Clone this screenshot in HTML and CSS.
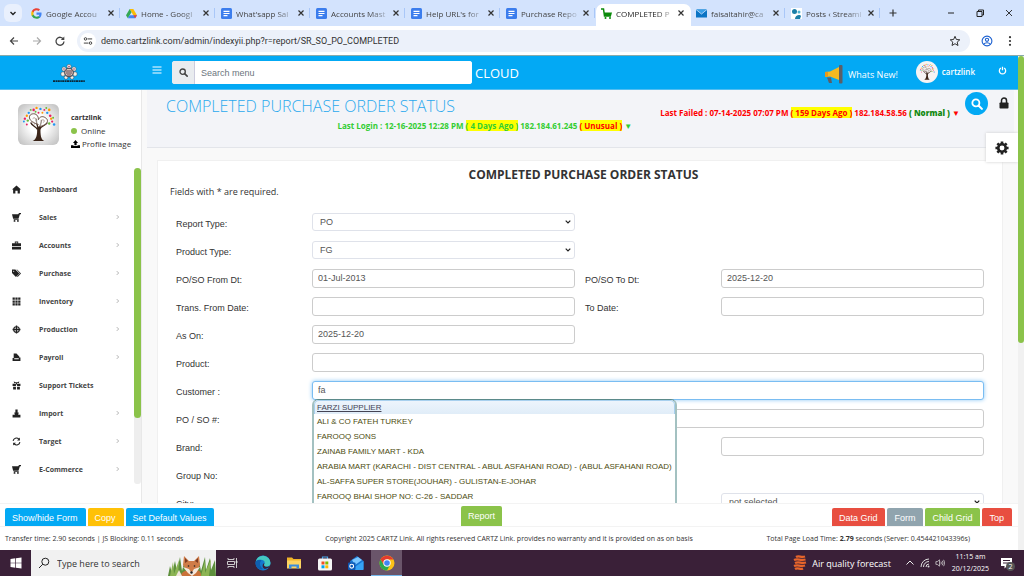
FILE: index.html
```
<!DOCTYPE html>
<html lang="en">
<head>
<meta charset="utf-8">
<title>COMPLETED PURCHASE ORDER STATUS</title>
<meta name="viewport" content="width=device-width, initial-scale=1">
<link rel="stylesheet" href="styles.css">
</head>
<body>
<svg class="defs" aria-hidden="true">
  <symbol id="doc" viewBox="0 0 11 11"><rect width="11" height="11" rx="1.500" fill="#3b7ded"/><path d="M2.500 3.300h6M2.500 5.500h6M2.500 7.700h4" stroke="#fff" stroke-width="1.200"/></symbol>
  <symbol id="x" viewBox="0 0 8 8"><path d="M1.500 1.500l5 5M6.500 1.500l-5 5" stroke="#333" stroke-width="1.200"/></symbol>
  <symbol id="mag" viewBox="0 0 16 16"><circle cx="6.500" cy="6.500" r="4.700" fill="none" stroke="currentColor" stroke-width="2.400"/><path d="M10 10l4.500 4.500" stroke="currentColor" stroke-width="2.800" stroke-linecap="round"/></symbol>
  <symbol id="chev" viewBox="0 0 6 8"><path d="M2 1.500L4.500 4 2 6.500" fill="none" stroke="#999" stroke-width="1"/></symbol>
  <symbol id="cart" viewBox="0 0 16 16"><path d="M0 2h11l1.500-2H16v2h-2L11.500 10H2zM3 11h9v1.500H3z"/><circle cx="4.500" cy="14" r="1.700"/><circle cx="10.500" cy="14" r="1.700"/></symbol>
  <symbol id="tree" viewBox="0 0 40 40">
    <path d="M20 25c-1-4-3-7-2-11m2 11c2-4 3-6 3-10M19 25c-2-3-6-4-7-7m9 7c2-4 6-4 8-7" fill="none" stroke="#3a2418" stroke-width="1.400"/>
    <path d="M18.500 23h3.500c0 7 0 12 4 14H14c4-2 5-7 4.500-14z" fill="#3a2418"/>
    <path d="M20 20C8 17 9 9 15 9c4 0 5 4 5 6 1-3 4-4 7-2 5 3 1 9-7 9" fill="#fff" fill-opacity=".5" stroke="#6b5145" stroke-width="1"/>
    <path d="M14 14c2-2 4 0 3 2m6 0c2-2 4 0 2 2m-12-1c2 0 3 1 3 3" fill="none" stroke="#9a847a" stroke-width=".8"/>
    <g fill="#e91e63"><circle cx="15" cy="5" r="1.300"/><circle cx="26" cy="5" r="1"/><circle cx="32" cy="11" r="1.300"/><circle cx="6" cy="14" r="1.200"/><circle cx="8" cy="20" r="1"/><circle cx="20" cy="8" r="1"/><circle cx="34" cy="17" r="1.100"/></g>
    <g fill="#2196f3"><circle cx="10" cy="8" r="1.200"/><circle cx="22" cy="4" r="1.200"/><circle cx="29" cy="8" r="1.200"/><circle cx="36" cy="20" r="1.300"/><circle cx="5" cy="17" r="1"/></g>
    <g fill="#ff9800"><circle cx="18" cy="3" r="1.200"/><circle cx="8" cy="11" r="1.200"/><circle cx="31" cy="5" r="1.300"/><circle cx="33" cy="14" r="1.200"/><circle cx="24" cy="8" r="1"/></g>
    <g fill="#66bb3a"><circle cx="12" cy="5" r="1"/><circle cx="28" cy="3" r="1"/><circle cx="35" cy="13" r="1"/><circle cx="9" cy="16" r="1.200"/><circle cx="31" cy="19" r="1.200"/><circle cx="17" cy="7" r="1"/></g>
  </symbol>
</svg>

<div class="tabs">
  <button class="tab-search" aria-label="Search tabs"><svg viewBox="0 0 10 10"><path d="M2.500 4l2.500 2.500L7.500 4" fill="none" stroke="#222" stroke-width="1.400"/></svg></button>
  <div class="tab"><svg class="fav" viewBox="0 0 24 24"><path fill="#4285f4" d="M23 12.300c0-.8-.1-1.500-.2-2.300H12v4.500h6.200a5.300 5.300 0 0 1-2.300 3.500v3h3.700c2.200-2 3.400-5 3.400-8.700z"/><path fill="#34a853" d="M12 23.500c3.100 0 5.700-1 7.600-2.800l-3.700-2.900c-1 .7-2.300 1.100-3.900 1.100-3 0-5.500-2-6.400-4.700H1.800v3A11.500 11.500 0 0 0 12 23.500z"/><path fill="#fbbc05" d="M5.600 14.200a7 7 0 0 1 0-4.400v-3H1.800a11.500 11.500 0 0 0 0 10.400z"/><path fill="#ea4335" d="M12 5.100c1.700 0 3.200.6 4.400 1.700l3.300-3.300A11.500 11.500 0 0 0 1.800 6.800l3.800 3C6.500 7.100 9 5.100 12 5.100z"/></svg><span>Google Accou</span><svg class="close"><use href="#x"/></svg></div>
  <div class="tab"><svg class="fav" viewBox="0 0 24 22"><path fill="#fbbc04" d="M8 1h8l8 14h-8z"/><path fill="#34a853" d="M8 1l4 7L4 21.500 0 15z"/><path fill="#4285f4" d="M8 15h16l-4 6.500H4z"/><path fill="#ea4335" d="M16 15h8l-4 6.500z"/></svg><span>Home - Googl</span><svg class="close"><use href="#x"/></svg></div>
  <div class="tab"><svg class="fav"><use href="#doc"/></svg><span>What'sapp Sal</span><svg class="close"><use href="#x"/></svg></div>
  <div class="tab"><svg class="fav"><use href="#doc"/></svg><span>Accounts Mast</span><svg class="close"><use href="#x"/></svg></div>
  <div class="tab"><svg class="fav"><use href="#doc"/></svg><span>Help URL's for</span><svg class="close"><use href="#x"/></svg></div>
  <div class="tab"><svg class="fav"><use href="#doc"/></svg><span>Purchase Repo</span><svg class="close"><use href="#x"/></svg></div>
  <div class="tab active"><svg class="fav" viewBox="0 0 11 11"><path d="M0 1h2.500l1 7H10" fill="none" stroke="#0a8a0a" stroke-width="1.500"/><path d="M3 4.500h8L10 8H3.500z" fill="#0a8a0a"/><circle cx="4.500" cy="10" r="1" fill="#0a8a0a"/><circle cx="9" cy="10" r="1" fill="#0a8a0a"/></svg><span>COMPLETED P</span><svg class="close"><use href="#x"/></svg></div>
  <div class="tab"><svg class="fav" viewBox="0 0 11 11"><rect y="1.500" width="11" height="8" fill="#0b74c4"/><path d="M0 1.500l5.500 4.500L11 1.500" fill="#39a0e8" stroke="#d3e3fd" stroke-width=".8"/></svg><span>faisaltahir@ca</span><svg class="close"><use href="#x"/></svg></div>
  <div class="tab"><svg class="fav" viewBox="0 0 11 11"><rect width="11" height="11" fill="#fff"/><circle cx="3.500" cy="3.500" r="2.500" fill="#1b7fa8"/><circle cx="8" cy="4" r="1.500" fill="#4fb3d0"/><path d="M4 11c0-4 5-5 6-3l-1 3z" fill="#1b7fa8"/></svg><span>Posts ‹ Streaml</span><svg class="close"><use href="#x"/></svg></div>
  <button class="newtab" aria-label="New tab"><svg viewBox="0 0 10 10"><path d="M5 1.500v7M1.500 5h7" stroke="#333" stroke-width="1.200"/></svg></button>
  <div class="win">
    <button aria-label="Minimise"><svg viewBox="0 0 10 10"><path d="M2 5h6" stroke="#222"/></svg></button>
    <button aria-label="Restore"><svg viewBox="0 0 10 10"><path d="M2 3.500h5v5H2zM3.500 3.500V2h5v5H7" fill="none" stroke="#222"/></svg></button>
    <button aria-label="Close"><svg viewBox="0 0 10 10"><path d="M2 2l6 6M8 2L2 8" stroke="#222" stroke-width=".9"/></svg></button>
  </div>
</div>

<div class="toolbar">
  <button aria-label="Back"><svg viewBox="0 0 12 12"><path d="M10 6H2.500M6 2.500L2.500 6 6 9.500" fill="none" stroke="#444" stroke-width="1.200"/></svg></button>
  <button aria-label="Forward"><svg viewBox="0 0 12 12"><path d="M2 6h7.500M6 2.500L9.500 6 6 9.500" fill="none" stroke="#aaa" stroke-width="1.200"/></svg></button>
  <button aria-label="Reload"><svg viewBox="0 0 12 12"><path d="M9.500 4.300A4 4 0 1 0 10 6.500" fill="none" stroke="#444" stroke-width="1.300"/><path d="M10.300 1.500v3.500H6.800z" fill="#444"/></svg></button>
  <div class="omnibox">
    <span class="site"><svg viewBox="0 0 12 12"><path d="M5.500 3.500H11M1 8.500h5.500" stroke="#444" stroke-width="1.200"/><circle cx="3" cy="3.500" r="1.500" fill="none" stroke="#444" stroke-width="1.200"/><circle cx="9" cy="8.500" r="1.500" fill="none" stroke="#444" stroke-width="1.200"/></svg></span>
    <input type="text" aria-label="Address" value="demo.cartzlink.com/admin/indexyii.php?r=report/SR_SO_PO_COMPLETED">
    <svg class="star" viewBox="0 0 12 12"><path d="M6 1.300l1.400 3.200 3.400.3-2.600 2.300.8 3.400L6 8.700l-3 1.800.8-3.400-2.600-2.300 3.400-.3z" fill="none" stroke="#333"/></svg>
  </div>
  <button aria-label="Profile"><svg viewBox="0 0 12 12"><circle cx="6" cy="6" r="4.900" fill="none" stroke="#1a5fd0" stroke-width="1.100"/><circle cx="6" cy="4.800" r="1.600" fill="none" stroke="#1a5fd0" stroke-width="1.100"/><path d="M2.800 9.200c1.500-2 5-2 6.400 0" fill="none" stroke="#1a5fd0" stroke-width="1.100"/></svg></button>
  <button aria-label="Menu"><svg viewBox="0 0 12 12"><g fill="#333"><circle cx="6" cy="2.200" r="1.100"/><circle cx="6" cy="6" r="1.100"/><circle cx="6" cy="9.800" r="1.100"/></g></svg></button>
</div>

<div class="page">
  <div class="app">
    <header class="topbar">
      <a class="logo" href="#" aria-label="Home"><svg viewBox="0 0 34 20"><g fill="#f3efe6" stroke="#345" stroke-width=".5"><circle cx="17" cy="3.500" r="2.200"/><circle cx="12" cy="6" r="2.200"/><circle cx="22" cy="6" r="2.200"/><circle cx="11" cy="11" r="2.200"/><circle cx="23" cy="11" r="2.200"/><circle cx="14" cy="14.500" r="1.800"/><circle cx="20" cy="14.500" r="1.800"/></g><circle cx="17" cy="9.500" r="4.300" fill="#d8c7bd" stroke="#4a3a44" stroke-width="1"/><path d="M14 8h6M14 10h6M15 12h4" stroke="#534" stroke-width=".9"/><g fill="#b03a6b"><circle cx="17" cy="3.500" r=".8"/><circle cx="12" cy="6" r=".8"/><circle cx="22" cy="6" r=".8"/></g><path d="M1 18.200h32" stroke="#0b2738" stroke-width="1.800" stroke-dasharray="2.200 .5 1.500 .4"/></svg></a>
      <button class="burger" aria-label="Toggle menu"><svg viewBox="0 0 10 8"><path d="M.5 1h9M.5 4h9M.5 7h9" stroke="#fff" stroke-width="1.200"/></svg></button>
      <form class="search">
        <label for="menu-search" aria-label="Search menu"><svg><use href="#mag"/></svg></label>
        <input id="menu-search" type="text" placeholder="Search menu">
      </form>
      <span class="cloud">CLOUD</span>
      <a class="news" href="#"><svg viewBox="0 0 20 19"><path d="M1 7l5-.5L15 2v13l-9-3.500L1 12z" fill="#f5b921"/><path d="M1 7l3-.3v5L1 12z" fill="#e79a1a"/><rect x="15" y="0" width="3.500" height="18.500" rx="1" fill="#5c5f66"/><path d="M3 12.500h4l1 5.500H5z" fill="#5c5f66"/></svg>Whats New!</a>
      <a class="me" href="#"><svg class="avatar"><use href="#tree"/></svg>cartzlink</a>
      <button class="power" aria-label="Log out"><svg viewBox="0 0 10 10"><path d="M3.200 2.300a3.500 3.500 0 1 0 3.600 0M5 .8v4" fill="none" stroke="#fff" stroke-width="1.400"/></svg></button>
    </header>

    <div class="body">
      <aside class="side">
        <div class="user">
          <svg class="photo"><use href="#tree"/></svg>
          <div class="who">
            <strong>cartzlink</strong>
            <span><i class="dot"></i>Online</span>
            <a href="#"><svg viewBox="0 0 16 14"><path d="M8 0l4.500 5H10v4H6V5H3.500zM0 9h4.500v1.500h7V9H16v5H0z"/></svg>Profile Image</a>
          </div>
        </div>
        <div class="menu-wrap">
          <nav class="menu">
            <a href="#"><svg viewBox="0 0 16 16"><path d="M8 1l8 7h-2v7h-4v-5H6v5H2V8H0z"/></svg><span>Dashboard</span></a>
            <a href="#"><svg><use href="#cart"/></svg><span>Sales</span><svg class="chev"><use href="#chev"/></svg></a>
            <a href="#"><svg viewBox="0 0 16 16"><path d="M5 4V1h6v3h5v5H0V4zm1.500 0h3V2.500h-3zM0 10h16v5H0z"/></svg><span>Accounts</span><svg class="chev"><use href="#chev"/></svg></a>
            <a href="#"><svg viewBox="0 0 16 16"><path d="M0 1h6l7 7-6 6-7-7zM8 1h1l7 7-6 6-1-1 5-5z"/><circle cx="3" cy="4" r="1" fill="#fff"/></svg><span>Purchase</span><svg class="chev"><use href="#chev"/></svg></a>
            <a href="#"><svg viewBox="0 0 16 16"><path d="M1 1h4v4H1zM6 1h4v4H6zM11 1h4v4h-4zM1 6h4v4H1zM6 6h4v4H6zM11 6h4v4h-4zM1 11h4v4H1zM6 11h4v4H6zM11 11h4v4h-4z"/></svg><span>Inventory</span><svg class="chev"><use href="#chev"/></svg></a>
            <a href="#"><svg viewBox="0 0 16 16"><circle cx="8" cy="8" r="5" fill="none" stroke="#222" stroke-width="2"/><path d="M8 1v14M1 8h14" stroke="#222" stroke-width="2.400"/></svg><span>Production</span><svg class="chev"><use href="#chev"/></svg></a>
            <a href="#"><svg viewBox="0 0 16 16"><path d="M3 1h5l5 5v2h2v6H1V9h2zM4 9.500h8v1.500H4z" fill-rule="evenodd"/></svg><span>Payroll</span><svg class="chev"><use href="#chev"/></svg></a>
            <a href="#"><svg viewBox="0 0 16 16"><path d="M1 5h6V3L4 4 3 1l4 1h2l4-1-1 3-3-1v2h6v4H9V6H7v3H1zM2 10h5v5H2zM9 10h5v5H9z"/></svg><span>Support Tickets</span></a>
            <a href="#"><svg viewBox="0 0 16 16"><path d="M6 1h4v5h2l-1 4h4v5H1v-5h4L4 6h2z"/></svg><span>Import</span><svg class="chev"><use href="#chev"/></svg></a>
            <a href="#"><svg viewBox="0 0 16 16"><path d="M2 7a6 6 0 0 1 10-3.500M14 9a6 6 0 0 1-10 3.500" fill="none" stroke="#222" stroke-width="2"/><path d="M14 1v5H9zM2 15v-5h5z"/></svg><span>Target</span><svg class="chev"><use href="#chev"/></svg></a>
            <a href="#"><svg><use href="#cart"/></svg><span>E-Commerce</span><svg class="chev"><use href="#chev"/></svg></a>
          </nav>
          <div class="track"><div class="thumb"></div></div>
        </div>
      </aside>

      <main class="content">
        <div class="head">
          <div class="head-left">
            <h1>COMPLETED PURCHASE ORDER STATUS</h1>
            <p class="login">Last Login : 12-16-2025 12:28 PM <mark>( 4 Days Ago )</mark> 182.184.61.245 <mark class="bad">( Unusual )</mark> ▼</p>
          </div>
          <p class="failed">Last Failed : 07-14-2025 07:07 PM <mark>( 159 Days Ago )</mark> 182.184.58.56 <b>( Normal )</b> ▼</p>
          <button class="find" aria-label="Search"><svg><use href="#mag"/></svg></button>
          <button class="lock" aria-label="Lock"><svg viewBox="0 0 10 12"><path d="M2.500 6V3.500a2.500 2.500 0 0 1 5 0V6" fill="none" stroke="#222" stroke-width="1.500"/><rect x=".5" y="5.500" width="9" height="6" rx=".8" fill="#222"/></svg></button>
        </div>
        <button class="gear" aria-label="Settings"><svg viewBox="0 0 16 16"><circle cx="8" cy="8" r="4.300" fill="none" stroke="#222" stroke-width="3"/><g stroke="#222" stroke-width="3"><path d="M8 .5v3M8 12.500v3M.5 8h3M12.500 8h3M2.700 2.700l2 2M11.300 11.300l2 2M13.300 2.700l-2 2M4.700 11.300l-2 2"/></g></svg></button>

        <form class="card">
          <h2>COMPLETED PURCHASE ORDER STATUS</h2>
          <p class="note">Fields with * are required.</p>
          <div class="rows">
            <div class="row"><div class="field"><label for="f1">Report Type:</label><select id="f1"><option>PO</option></select></div><div class="field"></div></div>
            <div class="row"><div class="field"><label for="f2">Product Type:</label><select id="f2"><option>FG</option></select></div><div class="field"></div></div>
            <div class="row"><div class="field"><label for="f3">PO/SO From Dt:</label><input id="f3" type="text" value="01-Jul-2013"></div><div class="field"><label for="f4">PO/SO To Dt:</label><input id="f4" type="text" value="2025-12-20"></div></div>
            <div class="row"><div class="field"><label for="f5">Trans. From Date:</label><input id="f5" type="text"></div><div class="field"><label for="f6">To Date:</label><input id="f6" type="text"></div></div>
            <div class="row"><div class="field"><label for="f7">As On:</label><input id="f7" type="text" value="2025-12-20"></div><div class="field"></div></div>
            <div class="row"><div class="field"><label for="f8">Product:</label><input id="f8" type="text"></div></div>
            <div class="row"><div class="field suggest"><label for="f9">Customer :</label><input id="f9" class="focused" type="text" value="fa">
              <ul class="options">
                <li class="on">FARZI SUPPLIER</li>
                <li>ALI &amp; CO FATEH TURKEY</li>
                <li>FAROOQ SONS</li>
                <li>ZAINAB FAMILY MART - KDA</li>
                <li>ARABIA MART (KARACHI - DIST CENTRAL - ABUL ASFAHANI ROAD) - (ABUL ASFAHANI ROAD)</li>
                <li>AL-SAFFA SUPER STORE(JOUHAR) - GULISTAN-E-JOHAR</li>
                <li>FAROOQ BHAI SHOP NO: C-26 - SADDAR</li>
              </ul></div></div>
            <div class="row"><div class="field"><label for="f10">PO / SO #:</label><input id="f10" type="text"></div></div>
            <div class="row"><div class="field"><label for="f11">Brand:</label><input id="f11" type="text"></div><div class="field"><label for="f12" aria-label="Category"></label><input id="f12" type="text"></div></div>
            <div class="row"><div class="field"><label for="f13">Group No:</label><input id="f13" type="text"></div><div class="field"></div></div>
            <div class="row"><div class="field"><label for="f14">City:</label><input id="f14" type="text"></div><div class="field"><label for="f15" aria-label="Status"></label><select id="f15"><option>not selected</option></select></div></div>
          </div>
        </form>
      </main>
    </div>

    <div class="actions">
      <div class="group"><button class="blue">Show/hide Form</button><button class="amber">Copy</button><button class="blue">Set Default Values</button></div>
      <button class="green report">Report</button>
      <div class="group end"><button class="red">Data Grid</button><button class="grey">Form</button><button class="green">Child Grid</button><button class="red">Top</button></div>
    </div>
    <footer class="foot">
      <span>Transfer time: 2.90 seconds | JS Blocking: 0.11 seconds</span>
      <span>Copyright 2025 CARTZ Link. All rights reserved CARTZ Link. provides no warranty and it is provided on as on basis</span>
      <span class="load">Total Page Load Time: <b>2.79</b> seconds (Server: 0.454421043396s)</span>
    </footer>
  </div>
  <div class="pagebar"><div class="thumb"></div></div>
</div>

<div class="taskbar">
  <button class="start" aria-label="Start"><svg viewBox="0 0 12 12"><path d="M.5 2l4.800-.7v4.400H.5zM6 1.200L11.500.5v5.200H6zM.5 6.300h4.800v4.400L.5 10zM6 6.300h5.500v5.200L6 10.800z" fill="#fff"/></svg></button>
  <label class="tb-search"><svg viewBox="0 0 12 12"><circle cx="7.300" cy="4.700" r="3.500" fill="none" stroke="#222"/><path d="M4.800 7.200L1 11" stroke="#222"/></svg><input type="text" placeholder="Type here to search" aria-label="Type here to search">
    <svg class="fox" viewBox="0 0 48 22"><path d="M0 22l2-10 2 7 3-12 2 10 3-14 2 14 3-12 2 17zM28 22l3-15 2 10 4-14 1 13 4-12 1 12 4-10 1 16z" fill="#5d8f3c"/><path d="M2 22l3-14 1 12 5-14-1 16M33 22l4-15v12l6-14-2 17" fill="#8cb454"/><path d="M13 22c0-3 2-4 4-5l12-1c4 1 4 4 4 6z" fill="#c9713a"/><path d="M16 2l5 5h5l5-5 1 9-4 7-4 3-4-3-5-7z" fill="#cf7c48"/><path d="M17 4l3 3-3 2zM30 4l-3 3 3 2z" fill="#7b3b22"/><path d="M15 13l6 2 2.500 4 2.500-4 6-2-4 6-4 3-4-3z" fill="#f4e8dc"/><circle cx="20.500" cy="12" r=".8" fill="#222"/><circle cx="26.500" cy="12" r=".8" fill="#222"/><circle cx="23.500" cy="18.500" r="1.200" fill="#222"/><path d="M8 22l3-6 3 6z" fill="#efe5da"/></svg></label>
  <button aria-label="Task view"><svg class="tiny" viewBox="0 0 12 12"><path d="M2 1v1.500h6V1M2 11V9.500h6V11M1.500 4.500h7v3h-7zM10.500 1v10" fill="none" stroke="#ddd" stroke-width=".9"/><path d="M9.700 4h1.700v2H9.700z" fill="#ddd"/></svg></button>
  <button aria-label="Edge"><svg viewBox="0 0 16 16"><circle cx="8" cy="8" r="7.500" fill="#1479ce"/><path d="M.6 7A7.500 7.500 0 0 1 15.500 8c0 2.500-2 3.700-4 3.700s-2.800-.8-2.800-1.500 1-1 1-2.500C9.700 5.500 7 4.500 4.500 5 2 5.500.8 6.500.6 7z" fill="#45c8c0"/><path d="M.5 8c0-3 4-4 6-2.500C4.500 7 4 11 8 14c-4 2-7.500-2-7.500-6z" fill="#0f5fb0"/><path d="M9 10c0 2 4 2.500 6 .5l-1 2-4 1.500C7 13 7 9 9.300 8z" fill="#3a2038"/></svg></button>
  <button aria-label="Files"><svg viewBox="0 0 16 16"><path d="M1 2.500h5l1.500 1.500H15v9H1z" fill="#f0b429"/><path d="M1 5.500h14v8H1z" fill="#fcd462"/><path d="M3 13.500V9.500h10v4h-2.500v-2h-5v2z" fill="#3a8ddd"/></svg></button>
  <button aria-label="Store"><svg viewBox="0 0 16 16"><path d="M5.500 4V2h5v2" fill="none" stroke="#4aa8e8" stroke-width="1.200"/><rect x="1" y="3.500" width="14" height="12" rx="1.500" fill="#f5f5f5"/><path d="M4.500 6.500h3v3h-3z" fill="#f25022"/><path d="M8.300 6.500h3v3h-3z" fill="#7fba00"/><path d="M4.500 10.300h3v3h-3z" fill="#00a4ef"/><path d="M8.300 10.300h3v3h-3z" fill="#ffb900"/></svg></button>
  <button aria-label="Outlook"><svg viewBox="0 0 16 16"><path d="M2 6l7-5 6.500 5v8H3z" fill="#1976d2"/><path d="M4 5l6-3 4 3-7 5z" fill="#7cc7ff"/><path d="M4 14l11.500-8v9H5z" fill="#36a3f5"/><rect y="7.500" width="7.500" height="7.500" rx="1" fill="#0b58b5"/><circle cx="3.700" cy="11.200" r="1.900" fill="none" stroke="#fff" stroke-width="1.100"/></svg></button>
  <button class="current" aria-label="Chrome"><svg viewBox="0 0 16 16"><circle cx="8" cy="8" r="7.500" fill="#fbc116"/><path d="M1.500 4.250A7.500 7.500 0 0 0 8 15.500l3-5.500H5z" fill="#2da94f"/><path d="M1.500 4.300L5 10l3-5.500h6.500A7.500 7.500 0 0 0 1.500 4.300z" fill="#e33b2e"/><circle cx="8" cy="8" r="3.700" fill="#fff"/><circle cx="8" cy="8" r="2.800" fill="#4285f4"/></svg></button>
  <div class="tray">
    <span class="air"><svg viewBox="0 0 14 16"><path d="M3 2c3-2 5 1 9-.5M1 5c4-2 6 1 11.500-.5M2 8c4-2 6 1 11-.5M1 11c4-2 6 1 11-.5M2 14c3-2 5 1 8-.5" fill="none" stroke="#e8652b" stroke-width="2.200"/></svg>Air quality forecast</span>
    <svg class="ti" viewBox="0 0 10 10"><path d="M1.500 6.500L5 3l3.500 3.500" fill="none" stroke="#eee"/></svg>
    <svg class="ti" viewBox="0 0 10 10"><path d="M1 9A8 8 0 0 1 9 1M3.500 9A5.500 5.500 0 0 1 9 3.500M6 9a3 3 0 0 1 3-3" fill="none" stroke="#ddd"/><circle cx="8.500" cy="8.500" r="1" fill="#ddd"/></svg>
    <svg class="ti" viewBox="0 0 11 10"><path d="M1 3.500h1.500L5 1.500v7L2.500 6.500H1zM6.500 3.500q1 1.500 0 3M8 2.500q1.800 2.500 0 5M9.500 1.500q2.500 3.500 0 7" fill="none" stroke="#ddd" stroke-width=".8"/></svg>
    <span class="clock">11:15 am<br>20/12/2025</span>
    <span class="notif"><svg viewBox="0 0 12 12"><path d="M0 1h11v8H6l-2.500 2.500V9H0z" fill="#fff"/><path d="M2 3.500h7M2 6h7" stroke="#3a2038"/></svg><em>2</em></span>
  </div>
</div>
</body>
</html>
```
FILE: styles.css
```
* { box-sizing: border-box; }
html, body { height: 100%; }
body {
  margin: 0;
  display: flex;
  flex-direction: column;
  overflow: hidden;
  background: #fff;
  color: #333;
  font-family: "Open Sans", "Noto Sans", sans-serif;
  font-size: 8px;
}
button { border: 0; padding: 0; background: none; font: inherit; color: inherit; display: flex; align-items: center; justify-content: center; }
input, select { font: inherit; color: inherit; min-width: 0; }
a { color: inherit; text-decoration: none; }
p, h1, h2, ul { margin: 0; padding: 0; }
svg { display: block; flex: none; }
.defs { display: none; }

/* browser tabs */
.tabs { display: flex; align-items: center; flex: none; height: 26px; background: #d3e3fd; padding-left: 4px; font-size: 8px; }
.tab-search { width: 18px; height: 18px; border-radius: 6px; background: #e9f0fd; margin-right: 4px; }
.tab-search svg, .newtab svg, .win svg { width: 10px; height: 10px; }
.tab { flex: 0 1 95px; min-width: 0; height: 26px; padding: 0 6px 0 5px; display: flex; align-items: center; gap: 4px; position: relative; color: #444; }
.tab span { flex: 1; min-width: 0; overflow: hidden; white-space: nowrap; -webkit-mask-image: linear-gradient(90deg, #000 70%, rgba(0, 0, 0, .15)); mask-image: linear-gradient(90deg, #000 70%, rgba(0, 0, 0, .15)); }
.tab:not(.active)::after { content: ""; position: absolute; right: 1px; top: 8px; width: 1px; height: 10px; background: #a9c7f8; }
.tab.active { background: #fff; border-radius: 7px 7px 0 0; height: 22px; align-self: flex-end; padding-bottom: 4px; color: #222; }
.fav { width: 11px; height: 11px; }
.close { width: 8px; height: 8px; }
.newtab { width: 20px; height: 20px; margin-left: 2px; }
.win { display: flex; gap: 19px; margin-left: auto; padding-right: 10px; }

/* address bar */
.toolbar { display: flex; align-items: center; gap: 11px; flex: none; height: 30px; padding: 0 8px; background: #fff; border-bottom: 1px solid #8aa; }
.toolbar svg { width: 12px; height: 12px; }
.omnibox { flex: 1; display: flex; align-items: center; height: 22px; border-radius: 11px; background: #ecf1fa; padding: 0 9px 0 3px; }
.omnibox input { flex: 1; border: 0; background: none; outline: 0; font-family: Roboto, "Open Sans", sans-serif; font-size: 9px; padding: 0 5px; }
.site { width: 16px; height: 16px; border-radius: 8px; background: #fff; display: grid; place-items: center; }
.site svg { width: 10px; height: 10px; }

/* web page */
.page { flex: 1; min-height: 0; display: flex; }
.app { flex: 1; min-width: 0; display: flex; flex-direction: column; }
.pagebar { width: 6px; background: #f1f1f1; }
.pagebar .thumb { height: 58%; background: #8bc34a; border-radius: 3px; }

.topbar { display: flex; align-items: center; flex: none; height: 34px; background: #03a9f4; color: #fff; border-bottom: 1px solid #52bdf0; }
.logo { width: 138px; display: flex; justify-content: center; }
.logo svg { width: 34px; height: 20px; }
.burger { width: 34px; padding: 0 0 6px 4px; }
.burger svg { width: 10px; height: 8px; }
.search { display: flex; width: 300px; height: 23px; border-radius: 3px; overflow: hidden; background: #fff; color: #444; }
.search label { width: 23px; background: #e9ecef; border-right: 1px solid #ccd; display: grid; place-items: center; }
.search label svg { width: 9px; height: 9px; }
.search input { flex: 1; border: 0; padding: 0 6px; outline: 0; font-family: "Liberation Sans", Arial, sans-serif; font-size: 9px; }
.search input::placeholder { color: #6c757d; }
.cloud { font-size: 13px; margin-left: 3px; }
.news { display: flex; align-items: center; gap: 4px; margin-left: auto; padding-top: 4px; font-size: 9px; }
.news svg { width: 20px; height: 19px; }
.me { display: flex; align-items: center; gap: 4px; margin-left: 18px; padding-bottom: 2px; font-weight: 600; }
.avatar { width: 22px; height: 22px; border-radius: 11px; background: #f6f3f3; padding: 2px; }
.power { margin: 0 11px 5px 23px; }
.power svg { width: 9px; height: 9px; }

.body { flex: 1; min-height: 0; display: flex; overflow: hidden; background: #f9f9f9; }
.side { flex: none; width: 142px; background: #fff; border-right: 1px solid #e8e8e8; }
.user { display: flex; gap: 12px; padding: 14px 0 0 18px; height: 78px; }
.photo { width: 41px; height: 41px; border-radius: 6px; background: radial-gradient(#fff 30%, #bbb); padding: 1px; }
.who { display: flex; flex-direction: column; gap: 2px; padding-top: 8px; line-height: 11px; }
.who strong { font-size: 7px; }
.who span, .who a { display: flex; align-items: center; }
.who span { gap: 4px; }
.who a { gap: 2px; }
.who a svg { width: 9px; height: 8px; }
.dot { width: 6px; height: 6px; border-radius: 3px; background: #8bc34a; }
.menu-wrap { display: flex; height: 316px; }
.menu { flex: 1; padding: 7px 14px 0 12px; font-size: 7px; font-weight: 700; color: #444; }
.menu a { display: flex; align-items: center; height: 28px; }
.menu svg { width: 9px; height: 9px; fill: #222; }
.menu span { flex: 1; margin-left: 18px; }
.menu .chev { width: 5px; height: 6px; }
.track { width: 7px; background: #eee; border-radius: 3px; }
.track .thumb { height: 79%; background: #8bc34a; border-radius: 4px; }

.content { flex: 1; min-width: 0; position: relative; padding-left: 5px; }
.head { display: flex; align-items: flex-start; height: 58px; padding-left: 19px; background: #f3f4f8; border-bottom: 1px solid #e3e5ea; margin-right: 4px; }
.head-left { flex: 1; padding-top: 5px; }
h1 { font-size: 16px; line-height: 22px; font-weight: 300; color: #2aa9ee; }
.login, .failed { font-size: 8px; line-height: 11px; font-weight: 700; white-space: nowrap; }
.login { color: #32cd32; text-align: right; padding-top: 3px; }
.failed { color: #f00; padding: 17px 5px 0 28px; }
.failed b { color: #128a12; }
mark { background: #ff0; color: inherit; }
mark.bad { color: #f00; }
.find { width: 23px; height: 23px; margin-top: 2px; border-radius: 12px; background: #03a9f4; color: #fff; }
.find svg { width: 12px; height: 12px; }
.lock { margin: 7px 5px 0 11px; }
.lock svg { width: 10px; height: 12px; }
.gear { position: absolute; right: 0; top: 43px; width: 32px; height: 29px; background: #fff; box-shadow: 0 0 3px #ccc; }
.gear svg { width: 14px; height: 14px; }

.card { margin: 12px 15px 0 10px; padding: 5px 18px 0; background: #fff; border: 1px solid #f0f0f0; }
h2 { font-size: 12px; line-height: 17px; font-weight: 700; text-align: center; padding-left: 7px; }
.note { font-size: 9px; line-height: 17px; margin-left: -6px; }
.rows { padding-top: 8px; font-family: "Liberation Sans", Arial, sans-serif; font-size: 9px; }
.row { display: flex; gap: 10px; height: 28px; }
.field { flex: 1; min-width: 0; display: flex; align-items: center; }
.field label { flex: none; width: 136px; padding-top: 4px; }
.field input, .field select { flex: 1; border: 1px solid #ccc; border-radius: 3px; background: #fff; color: #555; }
.field input { height: 19px; padding: 0 5px; }
.field select {
  appearance: none;
  height: 18px;
  padding: 0 7px;
  border-color: #dfe2ea;
  background: #fff url("data:image/svg+xml,%3Csvg xmlns='http://www.w3.org/2000/svg' viewBox='0 0 6 4'%3E%3Cpath d='M.7.7L3 3 5.300.7' fill='none' stroke='%23222' stroke-width='1.200'/%3E%3C/svg%3E") no-repeat right 3px center / 6px 4px;
}
.field input.focused { border-color: #7abdf2; box-shadow: 0 0 4px #8cc8f5; outline: 0; }
.suggest { position: relative; }
.options { position: absolute; left: 136px; top: 23px; z-index: 2; list-style: none; background: #fff; border: 2px solid #a3c1c1; border-top: 1px solid #5b8a8a; border-bottom: 0; border-radius: 6px 6px 0 0; font-size: 8px; line-height: 15px; color: #4d4d10; white-space: nowrap; height: 120px; }
.options li { padding: 0 3px; }
.options .on { background: linear-gradient(#edf4fc, #e0edf8); border: 1px solid #a8d0ee; border-bottom: 0; border-radius: 5px 5px 0 0; padding: 0 2px; line-height: 13px; text-decoration: underline; color: #445; }

.actions { display: grid; grid-template-columns: 1fr auto 1fr; align-items: end; flex: none; height: 24px; padding: 0 6px 0 5px; background: #fff; border-top: 1px solid #f3f3f3; border-bottom: 1px solid #f3f3f3; font-family: "Liberation Sans", Arial, sans-serif; font-size: 9px; }
.group { display: flex; gap: 2px; }
.end { justify-content: flex-end; }
.actions button { height: 18px; padding: 2px 8px 0 7px; border-radius: 2px 2px 0 0; color: #fff; }
.actions .report { height: 20px; padding: 0 7px; margin-right: 54px; }
.blue { background: #03a9f4; }
.amber { background: #ffc107; }
.green { background: #8bc34a; }
.red { background: #e84e40; }
.grey { background: #90a4ae; }
.foot { display: grid; grid-template-columns: 1fr auto 1fr; align-items: center; flex: none; height: 23px; padding: 0 5px; background: #fff; font-size: 7px; }
.load { text-align: right; padding-right: 43px; }

/* taskbar */
.taskbar { display: flex; flex: none; height: 26px; background: #3a2038; color: #fff; }
.taskbar > button { width: 31px; }
.taskbar > button svg { width: 16px; height: 16px; }
.taskbar .start svg, .taskbar > button .tiny { width: 12px; height: 12px; }
.tb-search { display: flex; align-items: center; width: 185px; background: #f1f1f1; color: #333; padding-left: 7px; gap: 7px; }
.tb-search svg { width: 12px; height: 12px; }
.tb-search input { flex: 1; border: 0; padding: 0; background: none; font-size: 9px; outline: 0; }
.tb-search input::placeholder { color: #333; opacity: 1; }
.tb-search .fox { width: 48px; height: 22px; align-self: flex-end; }
.current { background: #6a556a; border-bottom: 1px solid #76b9ed; }
.tray { display: flex; align-items: center; margin-left: auto; gap: 5px; padding-right: 11px; }
.air { display: flex; align-items: center; gap: 5px; font-size: 9px; margin-right: 9px; }
.air svg { width: 14px; height: 16px; }
.ti { width: 10px; height: 10px; }
.clock { font-size: 7px; line-height: 12px; text-align: center; margin-left: 2px; }
.notif { position: relative; margin-left: 7px; }
.notif svg { width: 12px; height: 12px; }
.notif em { position: absolute; left: 5px; top: 5px; width: 9px; height: 9px; border-radius: 5px; background: #555; font-size: 7px; line-height: 9px; text-align: center; font-style: normal; }
```
